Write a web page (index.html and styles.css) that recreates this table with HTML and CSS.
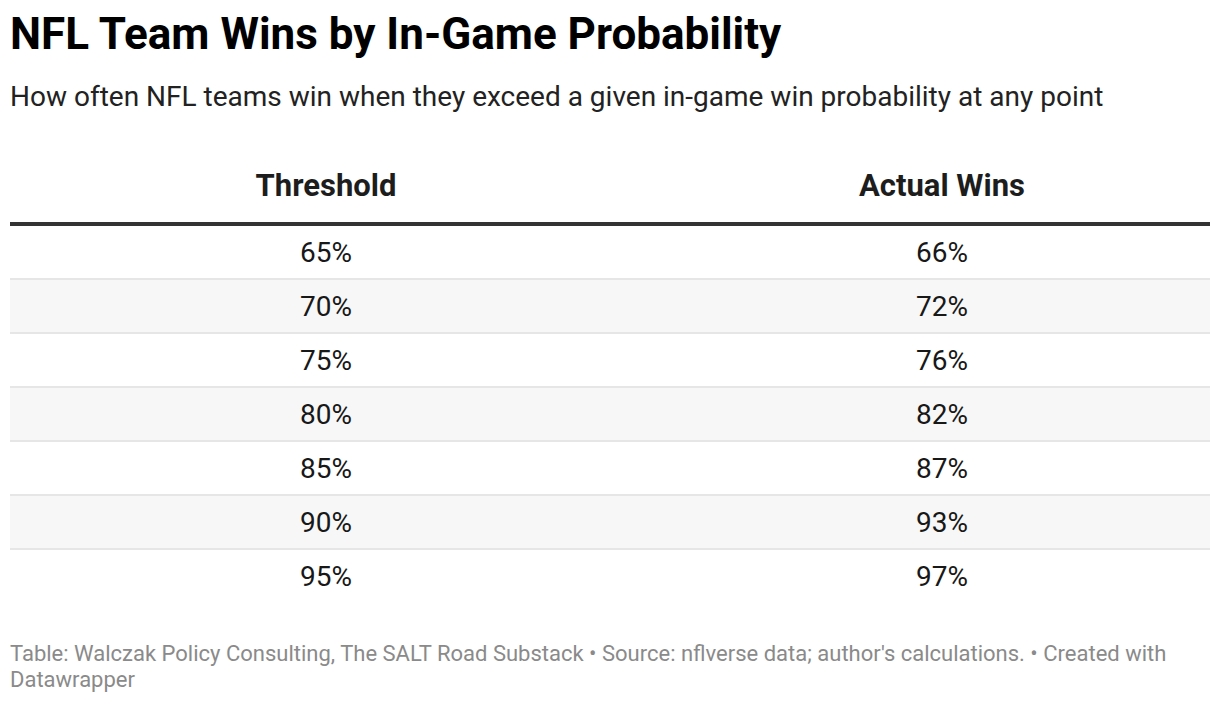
FILE: index.html
```html
<!DOCTYPE html>
<html>
<head>
<meta charset="utf-8">
<link rel="stylesheet" href="styles.css">
</head>
<body>
<div class="chart">
  <h1 class="title">NFL Team Wins by In-Game Probability</h1>
  <p class="subtitle">How often NFL teams win when they exceed a given in-game win probability at any point</p>
  <div class="table">
    <div class="row head">
      <div class="cell">Threshold</div>
      <div class="cell">Actual Wins</div>
    </div>
    <div class="row"><div class="cell">65%</div><div class="cell">66%</div></div>
    <div class="row alt"><div class="cell">70%</div><div class="cell">72%</div></div>
    <div class="row"><div class="cell">75%</div><div class="cell">76%</div></div>
    <div class="row alt"><div class="cell">80%</div><div class="cell">82%</div></div>
    <div class="row"><div class="cell">85%</div><div class="cell">87%</div></div>
    <div class="row alt"><div class="cell">90%</div><div class="cell">93%</div></div>
    <div class="row last"><div class="cell">95%</div><div class="cell">97%</div></div>
  </div>
  <p class="footer">Table: Walczak Policy Consulting, The SALT Road Substack • Source: nflverse data; author's calculations. • Created with Datawrapper</p>
</div>
</body>
</html>
```
FILE: styles.css
```css
html, body {
  margin: 0;
  padding: 0;
  background: #fff;
}
body {
  font-family: Roboto, "Liberation Sans", sans-serif;
  color: #181818;
}
.chart {
  padding: 8px 10px 10px;
}
.title {
  margin: 0;
  font-size: 44px;
  line-height: 52px;
  font-weight: 700;
  color: #000;
}
.subtitle {
  margin: 19px 0 0;
  font-size: 28px;
  line-height: 36px;
  color: #222;
}
.table {
  margin-top: 53px;
  display: flex;
  flex-direction: column;
}
.row {
  display: grid;
  grid-template-columns: 632px 1fr;
  column-gap: 32px;
  height: 52px;
  align-items: center;
  border-bottom: 2px solid #e6e6e6;
  font-size: 28px;
  color: #181818;
}
.row.alt {
  background: #f7f7f7;
}
.row.last {
  border-bottom-color: transparent;
}
.row.head {
  height: auto;
  padding-bottom: 18px;
  line-height: 36px;
  border-bottom: 4px solid #333;
  font-weight: 700;
  font-size: 31px;
  color: #1d1d1d;
}
.cell {
  text-align: center;
}
.footer {
  margin: 37px 0 0;
  font-size: 22px;
  line-height: 26px;
  color: #8a8a8a;
}
```
